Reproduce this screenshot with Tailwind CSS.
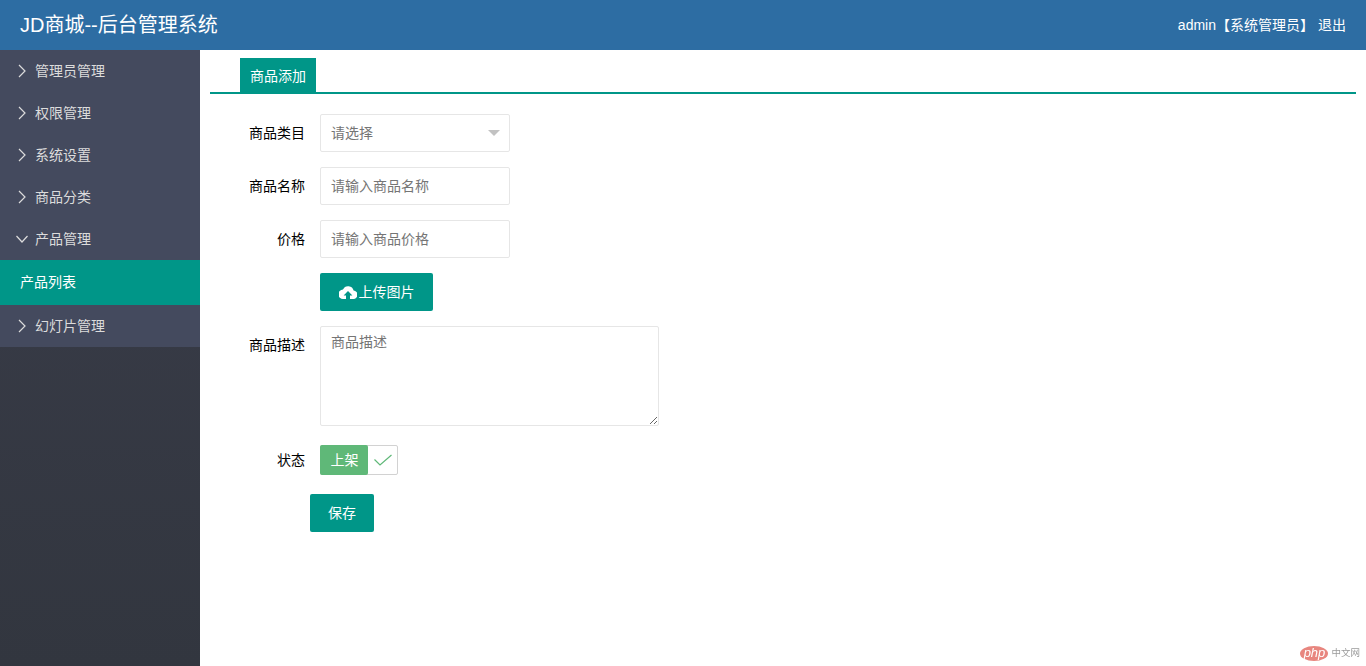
<!DOCTYPE html>
<html lang="zh-CN">

<head>
  <meta charset="UTF-8" />
  <meta name="viewport" content="width=device-width, initial-scale=1.0" />
  <title>JD商城--后台管理系统</title>
  <script src="https://cdn.jsdelivr.net/npm/@tailwindcss/browser@4"></script>
</head>

<body class="relative h-[666px] overflow-hidden bg-white font-['Liberation_Sans','Noto_Sans_CJK_SC',sans-serif] text-sm text-black">
  <!-- header -->
  <header class="flex h-[50px] items-center justify-between bg-[#2d6da3] pl-5 pr-5 text-white">
    <div class="text-xl tracking-normal">JD商城--后台管理系统</div>
    <div class="flex items-center text-sm">admin<span>【系统管理员】</span><span class="ml-1">退出</span></div>
  </header>

  <div class="flex h-[616px]">
    <!-- sidebar -->
    <aside class="flex w-[200px] shrink-0 flex-col bg-gradient-to-b from-[#3a3d4a] to-[#32363f] text-sm text-[#dcdcdc]">
      <div class="flex h-[42px] items-center bg-[#444a5e] pl-[18px]">
        <svg class="mr-[9px] h-3.5 w-2" viewBox="0 0 8 14" fill="none" stroke="currentColor" stroke-width="1.2"><path d="M1 1l6 6-6 6" /></svg>
        <span>管理员管理</span>
      </div>
      <div class="flex h-[42px] items-center bg-[#444a5e] pl-[18px]">
        <svg class="mr-[9px] h-3.5 w-2" viewBox="0 0 8 14" fill="none" stroke="currentColor" stroke-width="1.2"><path d="M1 1l6 6-6 6" /></svg>
        <span>权限管理</span>
      </div>
      <div class="flex h-[42px] items-center bg-[#444a5e] pl-[18px]">
        <svg class="mr-[9px] h-3.5 w-2" viewBox="0 0 8 14" fill="none" stroke="currentColor" stroke-width="1.2"><path d="M1 1l6 6-6 6" /></svg>
        <span>系统设置</span>
      </div>
      <div class="flex h-[42px] items-center bg-[#444a5e] pl-[18px]">
        <svg class="mr-[9px] h-3.5 w-2" viewBox="0 0 8 14" fill="none" stroke="currentColor" stroke-width="1.2"><path d="M1 1l6 6-6 6" /></svg>
        <span>商品分类</span>
      </div>
      <div class="flex h-[42px] items-center bg-[#444a5e] pl-4">
        <svg class="mr-[7px] h-2 w-3" viewBox="0 0 12 8" fill="none" stroke="currentColor" stroke-width="1.2"><path d="M0.5 1l5.5 6 5.5-6" /></svg>
        <span>产品管理</span>
      </div>
      <div class="flex h-[45px] items-center bg-[#009688] pb-0.5 pl-5 text-white">产品列表</div>
      <div class="flex h-[42px] items-center bg-[#444a5e] pl-[18px]">
        <svg class="mr-[9px] h-3.5 w-2" viewBox="0 0 8 14" fill="none" stroke="currentColor" stroke-width="1.2"><path d="M1 1l6 6-6 6" /></svg>
        <span>幻灯片管理</span>
      </div>
    </aside>

    <!-- main -->
    <main class="flex-1 px-2.5 pt-2">
      <div class="border-b-2 border-[#009688] pl-[30px]">
        <div class="flex h-[34px] w-[76px] items-center justify-center bg-[#009688] pt-0.5 text-sm text-white">商品添加</div>
      </div>

      <form class="pt-5">
        <div class="mb-[15px] flex">
          <label class="mr-[15px] flex h-[38px] w-[95px] items-center justify-end">商品类目</label>
          <div class="flex h-[38px] w-[190px] items-center justify-between rounded-[2px] border border-[#e6e6e6] pl-2.5 pr-[9px] text-[#757575]">
            <span>请选择</span>
            <span class="h-0 w-0 border-x-[6px] border-t-[6px] border-x-transparent border-t-[#c2c2c2]"></span>
          </div>
        </div>
        <div class="mb-[15px] flex">
          <label class="mr-[15px] flex h-[38px] w-[95px] items-center justify-end">商品名称</label>
          <input class="h-[38px] w-[190px] rounded-[2px] border border-[#e6e6e6] pl-2.5 placeholder:text-[#757575]" placeholder="请输入商品名称" />
        </div>
        <div class="mb-[15px] flex">
          <label class="mr-[15px] flex h-[38px] w-[95px] items-center justify-end">价格</label>
          <input class="h-[38px] w-[190px] rounded-[2px] border border-[#e6e6e6] pl-2.5 placeholder:text-[#757575]" placeholder="请输入商品价格" />
        </div>
        <div class="mb-[15px] flex pl-[110px]">
          <button type="button" class="flex h-[38px] w-[113px] items-center justify-center rounded-[2px] bg-[#009688] text-sm text-white">
            <svg class="mr-0.5 h-[14px] w-[18px]" viewBox="0 0 18 14" fill="currentColor"><path d="M14.6 5.6A5.6 5.6 0 0 0 4 4.5 4.6 4.6 0 0 0 4.2 14H7v-3.6H4.6L9 6l4.4 4.4H11V14h3a4.2 4.2 0 0 0 .6-8.4z" /></svg>
            上传图片
          </button>
        </div>
        <div class="mb-[19px] flex">
          <label class="mr-[15px] w-[95px] pt-[9px] text-right leading-5">商品描述</label>
          <textarea class="h-[100px] w-[339px] rounded-[2px] border border-[#e6e6e6] px-2.5 py-[5px] leading-5 placeholder:text-[#757575]" placeholder="商品描述"></textarea>
        </div>
        <div class="mb-[19px] flex">
          <label class="mr-[15px] flex h-[30px] w-[95px] items-center justify-end">状态</label>
          <div class="flex h-[30px] w-[78px] rounded-[2px] border border-[#d2d2d2]">
            <span class="-m-px flex h-[30px] w-[48px] items-center justify-center rounded-[2px] bg-[#5fb878] pl-px text-white">上架</span>
            <span class="flex flex-1 items-center justify-center">
              <svg class="ml-0.5 h-3 w-[18px] text-[#5fb878]" viewBox="0 0 18 12" fill="none" stroke="currentColor" stroke-width="1.2"><path d="M0.5 5.5l5.5 5.5L17.5 1" /></svg>
            </span>
          </div>
        </div>
        <div class="pl-[100px]">
          <button type="button" class="h-[38px] w-16 rounded-[2px] bg-[#009688] text-sm text-white">保存</button>
        </div>
      </form>
    </main>
  </div>

  <!-- watermark -->
  <div class="absolute bottom-0 right-[6px] flex h-[26px] items-center blur-[0.3px]">
    <span class="flex h-[15px] w-[28px] items-center justify-center rounded-[50%] bg-[#e8867f] pb-0.5 text-[13px] italic leading-none text-white">php</span>
    <span class="ml-[3px] text-[9.5px] text-[#9a9a9a]">中文网</span>
  </div>
</body>

</html>
